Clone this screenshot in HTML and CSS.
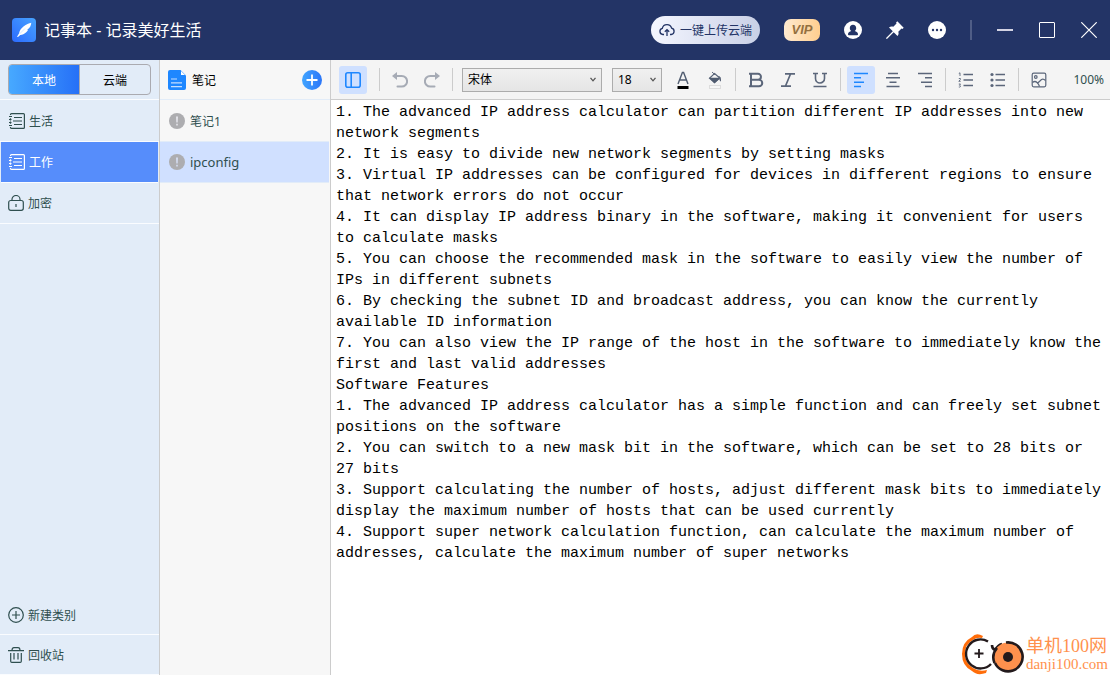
FILE: index.html
```html
<!DOCTYPE html>
<html lang="zh-CN">
<head>
<meta charset="utf-8">
<title>记事本 - 记录美好生活</title>
<link rel="stylesheet" href="styles.css">
</head>
<body>
<div class="app">
  <header class="titlebar">
    <svg class="logo" viewBox="0 0 24 24" aria-hidden="true">
      <defs><linearGradient id="blue" x1="0" y1="1" x2="1" y2="0"><stop offset="0" stop-color="#2c6bff"/><stop offset="1" stop-color="#47a3ff"/></linearGradient></defs>
      <rect width="24" height="24" rx="4" fill="url(#blue)"/>
      <path d="M19.300 4.800C14.500 5.600 8.200 9.500 7 15.500L5 18.800L6 19L8.200 16.900C13 16.700 15.300 13.200 16 12L15.200 11.800C18 9.800 19 7.800 19.300 4.800Z" fill="#fff"/>
      <path d="M7.500 16L13 10.500" stroke="#b9d6ff" stroke-width=".6"/>
    </svg>
    <h1 class="title">记事本 - 记录美好生活</h1>
    <button class="upload" type="button">
      <svg width="16" height="14" viewBox="0 0 16 14" fill="none" stroke="#233466" stroke-width="1.300" aria-hidden="true"><path d="M5 11.500H3.800A3.100 3.100 0 0 1 3.300 5.400A4.800 4.800 0 0 1 12.600 5.200A3.200 3.200 0 0 1 12.200 11.500H11M8 13V6.700M5.800 8.800L8 6.600L10.200 8.800"/></svg>
      <span>一键上传云端</span>
    </button>
    <button class="vip" type="button">VIP</button>
    <button class="winbtn" type="button" aria-label="账户"><svg width="18" height="18" viewBox="0 0 18 18"><circle cx="9" cy="9" r="9" fill="#fff"/><path d="M9 3.800C11 3.800 12.200 5.200 12.200 7C12.200 8.500 11.600 9.400 10.700 10C12.500 10.500 14 11.500 14 13.200C14 14 13.500 14.200 13 14.200H5C4.500 14.200 4 14 4 13.200C4 11.500 5.500 10.500 7.300 10C6.400 9.400 5.800 8.500 5.800 7C5.800 5.200 7 3.800 9 3.800Z" fill="#233466"/></svg></button>
    <button class="winbtn" type="button" aria-label="置顶"><svg width="18" height="18" viewBox="0 0 18 18" fill="#fff"><path d="M11.300.3L17.700 6.700L16.500 7.900L15.500 7.500L12.300 10.700C12.900 12.300 12.600 13.800 11.500 15L7.700 11.200L1.200 17.800L.2 17.900L.3 16.800L6.800 10.300L3 6.500C4.200 5.400 5.700 5.100 7.300 5.700L10.500 2.500L10.100 1.500Z"/></svg></button>
    <button class="winbtn" type="button" aria-label="更多"><svg width="18" height="18" viewBox="0 0 18 18"><circle cx="9" cy="9" r="9" fill="#fff"/><g fill="#233466"><circle cx="5" cy="9" r="1.200"/><circle cx="9" cy="9" r="1.200"/><circle cx="13" cy="9" r="1.200"/></g></svg></button>
    <span class="titlesep"></span>
    <button class="winbtn" type="button" aria-label="最小化"><svg width="16" height="16" viewBox="0 0 16 16"><path d="M0 8H16" stroke="#d3d3e3" stroke-width="2"/></svg></button>
    <button class="winbtn" type="button" aria-label="最大化"><svg width="16" height="16" viewBox="0 0 16 16"><rect x=".5" y=".5" width="15" height="15" rx=".5" fill="none" stroke="#fff"/></svg></button>
    <button class="winbtn" type="button" aria-label="关闭"><svg width="16" height="16" viewBox="0 0 16 16"><path d="M.3.300L15.700 15.700M15.700.3L.3 15.700" stroke="#fff" stroke-width="1.200"/></svg></button>
  </header>

  <main class="main">
    <nav class="sidebar">
      <div class="tabswrap"><div class="tabs">
        <button class="tab tab-on" type="button">本地</button>
        <button class="tab" type="button">云端</button>
      </div></div>
      <button class="cat" type="button"><svg class="icon" viewBox="0 0 16 16"><path d="M1.500 2V1.500Q1.500.6 2.500.6H14.400Q15.400.6 15.400 1.600V14.400Q15.400 15.400 14.400 15.400H2.500Q1.500 15.400 1.500 14.500V14M1.500 5V5.800M1.500 7.600V8.400M1.500 10.200V11M5 4.500H13M4 8H13M5 11.500H13M0 3.500H3M0 6.500H2.500M0 9.500H2.500M0 12.500H3"/></svg>生活</button>
      <button class="cat cat-on" type="button"><svg class="icon" viewBox="0 0 16 16"><path d="M1.500 2V1.500Q1.500.6 2.500.6H14.400Q15.400.6 15.400 1.600V14.400Q15.400 15.400 14.400 15.400H2.500Q1.500 15.400 1.500 14.500V14M1.500 5V5.800M1.500 7.600V8.400M1.500 10.200V11M5 4.500H13M4 8H13M5 11.500H13M0 3.500H3M0 6.500H2.500M0 9.500H2.500M0 12.500H3"/></svg>工作</button>
      <button class="cat cat-wide" type="button"><svg class="icon" viewBox="0 0 16 16"><rect x=".7" y="5.500" width="14.600" height="9.800" rx="2"/><path d="M4 5.500V4.300A4 3.800 0 0 1 12 4.300V5.500M8 9V12"/></svg>加密</button>
      <div class="bottom">
        <button class="cat cat-wide" type="button"><svg class="icon" viewBox="0 0 16 16"><circle cx="8" cy="8" r="7.300"/><path d="M8 4V12M4 8H12"/></svg>新建类别</button>
        <button class="cat cat-wide" type="button"><svg class="icon" viewBox="0 0 16 16"><path d="M0 3.700H16M4 3.500Q4 .7 6 .7H10Q12 .7 12 3.500M2.700 6V14.200Q2.700 15.300 3.800 15.300H12.200Q13.300 15.300 13.300 14.200V6M6 6V12.500M10 6V12.500"/></svg>回收站</button>
      </div>
    </nav>

    <section class="notes">
      <div class="noteshead">
        <svg width="18" height="20" viewBox="0 0 18 20" aria-hidden="true"><path d="M2 0H12.500L18 5.500V18Q18 20 16 20H2Q0 20 0 18V2Q0 0 2 0Z" fill="#1e87ff"/><path d="M13 1V5H17Z" fill="#fff"/><path d="M3 9H9M3 12.800H14M3 16.600H14" stroke="#c4deff" stroke-width="1.200"/></svg>
        <h2 class="notestitle">笔记</h2>
        <button class="add" type="button" aria-label="新建笔记"><svg width="20" height="20" viewBox="0 0 20 20"><defs><linearGradient id="plus"><stop offset="0" stop-color="#42a5ff"/><stop offset="1" stop-color="#2b76f8"/></linearGradient></defs><circle cx="10" cy="10" r="10" fill="url(#plus)"/><path d="M10 4.500V15.500M4.500 10H15.500" stroke="#fff" stroke-width="1.800"/></svg></button>
      </div>
      <button class="note" type="button"><svg width="16" height="16" viewBox="0 0 16 16"><circle cx="8" cy="8" r="8" fill="#adadb0"/><path d="M7 3.500H9L8.700 9.500H7.300ZM7.200 10.800H8.800V12.400H7.200Z" fill="#e4e4ea"/></svg>笔记1</button>
      <button class="note note-on" type="button"><svg width="16" height="16" viewBox="0 0 16 16"><circle cx="8" cy="8" r="8" fill="#adadb0"/><path d="M7 3.500H9L8.700 9.500H7.300ZM7.200 10.800H8.800V12.400H7.200Z" fill="#d4dcf0"/></svg>ipconfig</button>
    </section>

    <section class="editor">
      <div class="toolbar">
        <button class="tool tool-on" type="button" aria-label="侧栏"><svg width="16" height="16" viewBox="0 0 16 16" fill="none" stroke="#1e87ff" stroke-width="1.600"><rect x=".8" y=".8" width="14.400" height="14.400" rx="2"/><path d="M6.200 1V15"/></svg></button>
        <span class="sep sep-first"></span>
        <button class="tool" type="button" aria-label="撤销"><svg width="16" height="16" viewBox="0 0 16 16" fill="none" stroke="#a6abb5" stroke-width="2" stroke-linecap="round"><path d="M3 4H9.800A5.200 5.200 0 0 1 9.800 14.600H5.500"/><path d="M5 0V8L0 4Z" fill="#a6abb5" stroke="none"/></svg></button>
        <button class="tool" type="button" aria-label="重做"><svg width="16" height="16" viewBox="0 0 16 16" fill="none" stroke="#a6abb5" stroke-width="2" stroke-linecap="round"><path d="M13 4H6.200A5.200 5.200 0 0 0 6.200 14.600H10.500"/><path d="M11 0V8L16 4Z" fill="#a6abb5" stroke="none"/></svg></button>
        <span class="sep"></span>
        <span class="pick pick-font"><select aria-label="字体"><option>宋体</option></select><svg width="6" height="5" viewBox="0 0 6 5"><path d="M.5.800L3 3.800L5.500.8" fill="none" stroke="#555" stroke-width="1.300"/></svg></span>
        <span class="pick pick-size"><select aria-label="字号"><option>18</option></select><svg width="6" height="5" viewBox="0 0 6 5"><path d="M.5.800L3 3.800L5.500.8" fill="none" stroke="#555" stroke-width="1.300"/></svg></span>
        <button class="tool" type="button" aria-label="文字颜色"><svg width="16" height="18" viewBox="0 0 16 18" fill="none"><path d="M3 13L7.400 1.500H8.600L13 13M4.700 9H11.300" stroke="#505c70" stroke-width="1.400"/><path d="M2.500 16.500H13.500" stroke="#000" stroke-width="3"/></svg></button>
        <button class="tool" type="button" aria-label="填充颜色"><svg width="16" height="18" viewBox="0 0 16 18"><path d="M7.500 2.500L12.800 7L7.500 11.500L2.500 7.200Z" fill="none" stroke="#5b667a" stroke-width="1.200"/><path d="M2 6.800H13.500L7.500 12.500Z" fill="#505c70"/><path d="M5 1L8 3.800M7.500 2.500L5.500 4.500" stroke="#5b667a"/><path d="M11 5Q14.500 5 14 10.500L13 10Z" fill="#5b667a"/><rect x="2.500" y="14.500" width="11" height="3" fill="#f7f7f7" stroke="#ddd"/></svg></button>
        <span class="sep"></span>
        <button class="tool" type="button" aria-label="加粗"><svg width="16" height="16" viewBox="0 0 16 16" fill="none" stroke="#5b667a" stroke-width="2"><path d="M1 1.800H10A2.900 2.900 0 0 1 10 7.700H3M3 2V14M10 7.700H11A3.200 3.200 0 0 1 11 14.200H1"/></svg></button>
        <button class="tool" type="button" aria-label="斜体"><svg width="16" height="16" viewBox="0 0 16 16" fill="none" stroke="#5b667a" stroke-width="1.700"><path d="M5 1.800H15M1 14.200H11M10.500 2L5.500 14"/></svg></button>
        <button class="tool" type="button" aria-label="下划线"><svg width="16" height="16" viewBox="0 0 16 16" fill="none" stroke="#5b667a" stroke-width="1.600"><path d="M1 1.500H6M10 1.500H15M3.500 1.500V6.500A4.500 4.500 0 0 0 12.500 6.500V1.500M1.500 14.500H14.500"/></svg></button>
        <span class="sep"></span>
        <button class="tool tool-on" type="button" aria-label="左对齐"><svg width="16" height="16" viewBox="0 0 16 16" stroke="#1e87ff" stroke-width="1.600"><path d="M1 1.500H15M1 5.800H8M1 10.200H11M1 14.500H8"/></svg></button>
        <button class="tool" type="button" aria-label="居中"><svg width="16" height="16" viewBox="0 0 16 16" stroke="#5b667a" stroke-width="1.600"><path d="M3 1.500H13M1 5.800H15M4.500 10.200H11.500M1.500 14.500H14.500"/></svg></button>
        <button class="tool" type="button" aria-label="右对齐"><svg width="16" height="16" viewBox="0 0 16 16" stroke="#5b667a" stroke-width="1.600"><path d="M1 1.500H15M8 5.800H15M4 10.200H15M8 14.500H15"/></svg></button>
        <span class="sep"></span>
        <button class="tool" type="button" aria-label="编号列表"><svg width="16" height="16" viewBox="0 0 16 16" fill="none" stroke="#5b667a" stroke-width="1.600"><path d="M5.500 2.500H15M5.500 8H15M5.500 13.500H15"/><path d="M.8 1.500L2 .8V4M.8 6.500H2.400V7.500L.8 9.300H2.700M.8 12H2.500L1.500 13.300Q2.700 13.500 2.400 14.700Q1.800 15.300.8 15" stroke-width=".9"/></svg></button>
        <button class="tool" type="button" aria-label="项目列表"><svg width="16" height="16" viewBox="0 0 16 16" stroke="#5b667a" stroke-width="1.600"><path d="M5.500 2.500H15M5.500 8H15M5.500 13.500H15"/><g fill="#5b667a" stroke="none"><circle cx="2" cy="2.500" r="1.600"/><circle cx="2" cy="8" r="1.600"/><circle cx="2" cy="13.500" r="1.600"/></g></svg></button>
        <span class="sep"></span>
        <button class="tool" type="button" aria-label="图片"><svg width="16" height="16" viewBox="0 0 16 16" fill="none" stroke="#5b667a" stroke-width="1.200"><rect x="1.200" y="1.200" width="13.600" height="13.600" rx="1.500"/><circle cx="4.800" cy="5" r="1.300"/><path d="M1.500 10.500Q4 8.500 6 10.500T8.500 14.500M6.800 11L10.500 7.500Q12.500 6.500 14.500 8.500"/></svg></button>
        <button class="zoom" type="button">100%</button>
      </div>
      <div class="page" role="textbox" aria-multiline="true" aria-label="笔记内容" contenteditable="true" spellcheck="false">
        <p>1. The advanced IP address calculator can partition different IP addresses into new network segments</p>
        <p>2. It is easy to divide new network segments by setting masks</p>
        <p>3. Virtual IP addresses can be configured for devices in different regions to ensure that network errors do not occur</p>
        <p>4. It can display IP address binary in the software, making it convenient for users to calculate masks</p>
        <p>5. You can choose the recommended mask in the software to easily view the number of IPs in different subnets</p>
        <p>6. By checking the subnet ID and broadcast address, you can know the currently available ID information</p>
        <p>7. You can also view the IP range of the host in the software to immediately know the first and last valid addresses</p>
        <p>Software Features</p>
        <p>1. The advanced IP address calculator has a simple function and can freely set subnet positions on the software</p>
        <p>2. You can switch to a new mask bit in the software, which can be set to 28 bits or 27 bits</p>
        <p>3. Support calculating the number of hosts, adjust different mask bits to immediately display the maximum number of hosts that can be used currently</p>
        <p>4. Support super network calculation function, can calculate the maximum number of addresses, calculate the maximum number of super networks</p>
      </div>
    </section>
  </main>

  <div class="mark">
    <svg width="64" height="42" viewBox="0 0 64 42" fill="none" aria-hidden="true">
      <path d="M22 3Q15-1 11 4Q1 9 1 21Q1 33 11 38Q16 43 25 40L26 37Q18 39 12 35Q4 30 4 21Q4 11 12 7Q16 4 21 5Z" fill="#ff6d0a"/>
      <path d="M27 8.500A14.500 14.500 0 1 0 30 31" stroke="#231a1c" stroke-width="2.400"/>
      <path d="M31 12Q31 16 34 17Q37 12 41 11" stroke="#231a1c" stroke-width="2.600"/>
      <circle cx="47" cy="24" r="14.500" fill="#ff914d"/>
      <path d="M45 9.500A14.500 14.500 0 1 1 34 30M36 15A14.500 14.500 0 0 0 33.500 30" stroke="#231a1c" stroke-width="2.600"/>
      <circle cx="47" cy="24" r="5" fill="#231a1c"/>
      <path d="M18 16V25M13.500 20.500H22.500" stroke="#231a1c" stroke-width="1.800"/>
    </svg>
    <div class="marktext"><span class="markname">单机100网</span><span class="markurl">danji100.com</span></div>
  </div>
</div>
</body>
</html>
```
FILE: styles.css
```css
* { box-sizing: border-box; }
body {
  margin: 0;
  font-family: "Noto Sans", "Noto Sans CJK SC", sans-serif;
  font-size: 12px;
  color: #2f4f4f;
}
button {
  border: 0;
  padding: 0;
  margin: 0;
  background: none;
  font: inherit;
  color: inherit;
}
svg { display: block; flex: none; }
h1, h2, p { margin: 0; font-weight: 400; }

.app {
  position: relative;
  display: flex;
  flex-direction: column;
  min-height: 100vh;
}

/* Title bar */
.titlebar {
  display: flex;
  align-items: center;
  height: 60px;
  padding-left: 12px;
  background: #233466;
}
.logo { width: 24px; height: 24px; }
.title {
  flex: 1;
  margin-left: 8px;
  font-size: 16px;
  line-height: 24px;
  color: #fff;
}
.upload {
  display: flex;
  align-items: center;
  gap: 5px;
  height: 28px;
  padding: 0 8px;
  border-radius: 14px;
  background: linear-gradient(90deg, #f4f6ff, #c9d0e6);
  color: #233466;
}
.vip {
  width: 36px;
  height: 22px;
  margin: 0 12px 0 24px;
  border-radius: 7px;
  background: linear-gradient(90deg, #ffead0, #ffce8e);
  font: italic 700 13px/22px "Liberation Sans", sans-serif;
  color: #94703f;
}
.winbtn {
  display: flex;
  align-items: center;
  justify-content: center;
  width: 42px;
  height: 42px;
}
.titlesep {
  width: 2px;
  height: 20px;
  margin: 0 12px;
  background: #4f5d86;
}

/* Columns */
.main { display: flex; flex: 1; }
.sidebar {
  display: flex;
  flex-direction: column;
  width: 160px;
  border-right: 1px solid #ccc;
  background: #e2ecf8;
}
.tabswrap {
  height: 40px;
  padding: 4px 8px;
  border-bottom: 1px solid #fafcff;
}
.tabs {
  display: flex;
  height: 31px;
  border: 1px solid #aaaab0;
  border-radius: 4px;
  overflow: hidden;
}
.tab { flex: 1; color: #000; }
.tab-on {
  border-right: 1px solid #aaaab0;
  background: linear-gradient(90deg, #47a9ff, #2670f7);
  color: #fff;
}
.cat {
  display: flex;
  align-items: center;
  gap: 4px;
  height: 41px;
  padding: 0 9px;
  border-bottom: 1px solid #fafcff;
}
.cat:first-of-type { height: 42px; }
.cat-on {
  margin: 0 1px;
  padding: 0 8px;
  background: #568dfb;
  color: #fff;
}
.cat-wide { padding: 0 8px; }
.icon {
  width: 16px;
  height: 16px;
  fill: none;
  stroke: currentColor;
  stroke-width: 1.2;
}
.bottom {
  display: flex;
  flex-direction: column;
  margin-top: auto;
}
.bottom .cat { height: 40px; }

/* Note list */
.notes {
  display: flex;
  flex-direction: column;
  width: 171px;
  border-right: 1px solid #ccc;
  background: #f7f7f7;
}
.noteshead {
  display: flex;
  align-items: center;
  height: 40px;
  padding: 0 8px;
  border-bottom: 1px solid #e2ecf8;
}
.notestitle {
  flex: 1;
  margin-left: 6px;
  font-size: 12px;
  color: #000;
}
.note {
  display: flex;
  align-items: center;
  gap: 5px;
  height: 41px;
  margin-right: 1px;
  padding: 0 9px;
  border-bottom: 1px solid #e2ecf8;
}
.note:first-of-type { height: 42px; }
.note-on { background: #d0e0ff; font-size: 13px; }

/* Editor */
.editor {
  display: flex;
  flex: 1;
  flex-direction: column;
  min-width: 0;
  background: #fff;
}
.toolbar {
  display: flex;
  align-items: center;
  gap: 4px;
  height: 40px;
  padding: 0 6px 0 8px;
  border-bottom: 1px solid #ccc;
  background: #f4f4f4;
}
.tool {
  display: flex;
  flex: none;
  align-items: center;
  justify-content: center;
  width: 28px;
  height: 28px;
  border-radius: 3px;
}
.tool-on { background: #cfe0ff; }
.sep {
  flex: none;
  width: 1px;
  height: 23px;
  margin: 0 2px;
  background: #ccc;
}
.sep-first { margin-left: 8px; }
.pick { display: grid; align-items: center; margin: 0 3px; }
.pick select, .pick svg { grid-area: 1 / 1; }
.pick svg {
  justify-self: end;
  margin-right: 6px;
  pointer-events: none;
}
.pick select {
  width: 100%;
  height: 24px;
  padding: 0 5px;
  border: 1px solid #acacac;
  border-radius: 0;
  background: linear-gradient(#f0f0f0, #e5e5e5);
  appearance: none;
  font: 12px "Noto Sans", "Noto Sans CJK SC", sans-serif;
  color: #000;
}
.pick-font { width: 140px; }
.pick-size { width: 50px; }
.zoom { margin-left: auto; }
.page {
  flex: 1;
  padding: 2px 5px;
  outline: 0;
  font: 15px/21px "Liberation Mono", monospace;
  color: #000;
}

/* Corner mark */
.mark {
  position: absolute;
  right: 2px;
  bottom: 0;
  display: flex;
  align-items: center;
  gap: 1px;
  color: #ff914d;
}
.marktext { display: flex; flex-direction: column; }
.markname { font: 18px/20px "Liberation Serif", "Noto Sans CJK SC", serif; }
.markurl { font: 15px/17px "Liberation Serif", serif; }
```
